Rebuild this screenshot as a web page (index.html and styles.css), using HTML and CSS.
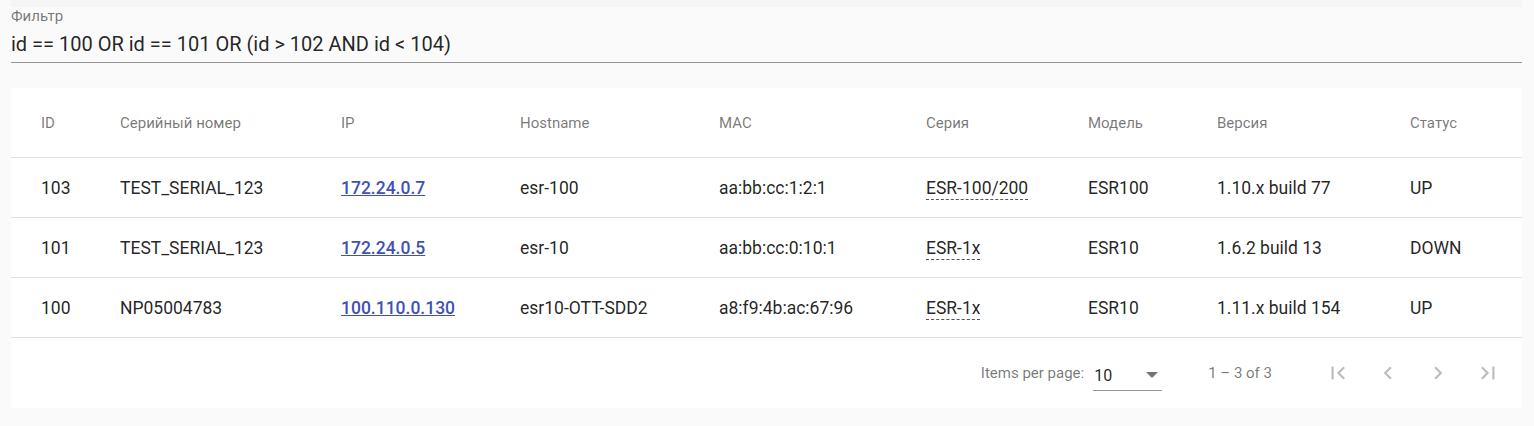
FILE: index.html
```html
<!DOCTYPE html>
<html lang="ru">
<head>
  <meta charset="UTF-8" />
  <title>Устройства</title>
  <link rel="stylesheet" href="styles.css">
</head>
<body>
  <div class="page">
    <div class="top-strip"></div>

    <!-- Поле фильтра -->
    <div class="filter">
      <label class="filter-label">Фильтр</label>
      <div class="filter-input">id == 100 OR id == 101 OR (id &gt; 102 AND id &lt; 104)</div>
    </div>

    <!-- Таблица устройств -->
    <div class="card">
      <table class="devices">
        <colgroup>
          <col style="width:109px"><col style="width:221px"><col style="width:179px">
          <col style="width:199px"><col style="width:207px"><col style="width:162px">
          <col style="width:129px"><col style="width:193px"><col>
        </colgroup>
        <thead>
          <tr>
            <th>ID</th><th>Серийный номер</th><th>IP</th><th>Hostname</th><th>MAC</th>
            <th>Серия</th><th>Модель</th><th>Версия</th><th>Статус</th>
          </tr>
        </thead>
        <tbody>
          <tr>
            <td>103</td><td>TEST_SERIAL_123</td><td><a class="ip" href="#">172.24.0.7</a></td>
            <td>esr-100</td><td>aa:bb:cc:1:2:1</td><td><span class="series">ESR-100/200</span></td>
            <td>ESR100</td><td>1.10.x build 77</td><td>UP</td>
          </tr>
          <tr>
            <td>101</td><td>TEST_SERIAL_123</td><td><a class="ip" href="#">172.24.0.5</a></td>
            <td>esr-10</td><td>aa:bb:cc:0:10:1</td><td><span class="series">ESR-1x</span></td>
            <td>ESR10</td><td>1.6.2 build 13</td><td>DOWN</td>
          </tr>
          <tr>
            <td>100</td><td>NP05004783</td><td><a class="ip" href="#">100.110.0.130</a></td>
            <td>esr10-OTT-SDD2</td><td>a8:f9:4b:ac:67:96</td><td><span class="series">ESR-1x</span></td>
            <td>ESR10</td><td>1.11.x build 154</td><td>UP</td>
          </tr>
        </tbody>
      </table>

      <div class="paginator">
        <span class="per-page-label">Items per page:</span>
        <div class="per-page-select">
          <span>10</span>
          <span class="arrow"></span>
        </div>
        <span class="range">1 – 3 of 3</span>
        <div class="nav">
          <button class="nav-btn" title="First page">
            <svg viewBox="0 0 24 24" width="26" height="26"><path d="M18.41 16.59L13.82 12l4.59-4.59L17 6l-6 6 6 6zM6 6h2v12H6z"/></svg>
          </button>
          <button class="nav-btn" title="Previous page">
            <svg viewBox="0 0 24 24" width="26" height="26"><path d="M15.41 7.41L14 6l-6 6 6 6 1.41-1.41L10.83 12z"/></svg>
          </button>
          <button class="nav-btn" title="Next page">
            <svg viewBox="0 0 24 24" width="26" height="26"><path d="M10 6L8.59 7.41 13.17 12l-4.58 4.59L10 18l6-6z"/></svg>
          </button>
          <button class="nav-btn" title="Last page">
            <svg viewBox="0 0 24 24" width="26" height="26"><path d="M5.59 7.41L10.18 12l-4.59 4.59L7 18l6-6-6-6zM16 6h2v12h-2z"/></svg>
          </button>
        </div>
      </div>
    </div>
  </div>
</body>
</html>
```

FILE: styles.css
```css
body {
  margin: 0;
  padding: 0;
  background-color: #fafafa;
  font-family: Roboto, "Noto Sans", sans-serif;
  color: rgba(0, 0, 0, 0.87);
}
.page {
  width: 1511px;
  margin-left: 11px;
}
.top-strip {
  height: 7px;
  background-color: #f5f5f5;
}
/* Поле фильтра */
.filter {
  padding-top: 1px;
  border-bottom: 1px solid #949494;
}
.filter-label {
  display: block;
  font-size: 15px;
  line-height: 17px;
  color: rgba(0, 0, 0, 0.54);
}
.filter-input {
  font-size: 20px;
  line-height: 22px;
  padding: 8px 0 7px;
  color: rgba(0, 0, 0, 0.87);
}
/* Карточка с таблицей */
.card {
  margin-top: 25px;
  background-color: #fff;
}
.devices {
  width: 100%;
  border-collapse: collapse;
  table-layout: fixed;
}
.devices th {
  height: 69px;
  text-align: left;
  font-weight: normal;
  font-size: 15px;
  color: rgba(0, 0, 0, 0.54);
  padding: 0;
  border-bottom: 1px solid #e0e0e0;
}
.devices td {
  height: 59px;
  padding: 0;
  font-size: 17.5px;
  border-bottom: 1px solid #e0e0e0;
  white-space: nowrap;
}
.devices th:first-child,
.devices td:first-child {
  padding-left: 30px;
}
.ip {
  color: #3f51b5;
  font-weight: 500;
  text-decoration: underline;
}
.series {
  border-bottom: 1px dashed #555;
  padding-bottom: 1px;
}
/* Пагинация */
.paginator {
  height: 70px;
  display: flex;
  align-items: center;
  justify-content: flex-end;
  font-size: 15px;
  color: rgba(0, 0, 0, 0.54);
}
.per-page-label {
  margin-right: 9px;
}
.per-page-select {
  width: 69px;
  box-sizing: border-box;
  display: flex;
  align-items: center;
  justify-content: space-between;
  padding: 5px 4px 5px 1px;
  margin-top: 5px;
  border-bottom: 1px solid #949494;
  font-size: 16px;
  color: rgba(0, 0, 0, 0.87);
}
.arrow {
  width: 0;
  height: 0;
  border-left: 6px solid transparent;
  border-right: 6px solid transparent;
  border-top: 6px solid #757575;
}
.range {
  margin-left: 46px;
  margin-right: 42px;
}
.nav {
  display: flex;
  gap: 2px;
  margin-right: 10px;
}
.nav-btn {
  width: 48px;
  height: 48px;
  border: none;
  background: none;
  padding: 0;
  display: flex;
  align-items: center;
  justify-content: center;
}
.nav-btn svg {
  fill: #bdbdbd;
}
```
